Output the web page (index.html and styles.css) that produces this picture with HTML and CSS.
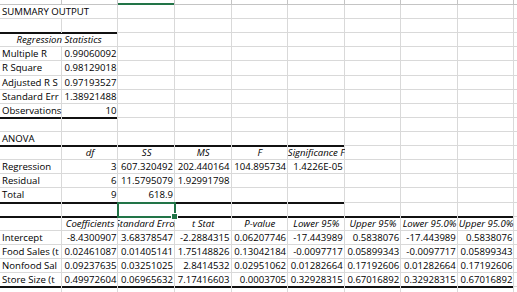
FILE: index.html
```html
<!DOCTYPE html>
<html>
<head>
<meta charset="utf-8">
<link rel="stylesheet" href="styles.css">
</head>
<body>
<div class="sheet">
  <div class="row head">
    <div class="c"></div><div class="c"></div><div class="c on"></div><div class="c"></div><div class="c"></div><div class="c"></div><div class="c"></div><div class="c"></div><div class="c"></div><div class="c"></div>
  </div>
  <div class="row">
    <div class="c span2">SUMMARY OUTPUT</div><div class="c"></div><div class="c"></div><div class="c"></div><div class="c"></div><div class="c"></div><div class="c"></div><div class="c"></div><div class="c"></div>
  </div>
  <div class="row">
    <div class="c bb"></div><div class="c bb"></div><div class="c"></div><div class="c"></div><div class="c"></div><div class="c"></div><div class="c"></div><div class="c"></div><div class="c"></div><div class="c"></div>
  </div>
  <div class="row">
    <div class="c span2 bt h"><span>Regression Statistics</span></div><div class="c"></div><div class="c"></div><div class="c"></div><div class="c"></div><div class="c"></div><div class="c"></div><div class="c"></div><div class="c"></div>
  </div>
  <div class="row">
    <div class="c">Multiple R</div><div class="c n">0.99060092</div><div class="c"></div><div class="c"></div><div class="c"></div><div class="c"></div><div class="c"></div><div class="c"></div><div class="c"></div><div class="c"></div>
  </div>
  <div class="row">
    <div class="c">R Square</div><div class="c n">0.98129018</div><div class="c"></div><div class="c"></div><div class="c"></div><div class="c"></div><div class="c"></div><div class="c"></div><div class="c"></div><div class="c"></div>
  </div>
  <div class="row">
    <div class="c">Adjusted R S</div><div class="c n">0.97193527</div><div class="c"></div><div class="c"></div><div class="c"></div><div class="c"></div><div class="c"></div><div class="c"></div><div class="c"></div><div class="c"></div>
  </div>
  <div class="row">
    <div class="c">Standard Err</div><div class="c n">1.38921488</div><div class="c"></div><div class="c"></div><div class="c"></div><div class="c"></div><div class="c"></div><div class="c"></div><div class="c"></div><div class="c"></div>
  </div>
  <div class="row">
    <div class="c bb">Observations</div><div class="c n bb">10</div><div class="c"></div><div class="c"></div><div class="c"></div><div class="c"></div><div class="c"></div><div class="c"></div><div class="c"></div><div class="c"></div>
  </div>
  <div class="row">
    <div class="c bt"></div><div class="c bt"></div><div class="c"></div><div class="c"></div><div class="c"></div><div class="c"></div><div class="c"></div><div class="c"></div><div class="c"></div><div class="c"></div>
  </div>
  <div class="row">
    <div class="c bb">ANOVA</div><div class="c bb"></div><div class="c bb"></div><div class="c bb"></div><div class="c bb"></div><div class="c bb"></div><div class="c"></div><div class="c"></div><div class="c"></div><div class="c"></div>
  </div>
  <div class="row">
    <div class="c bt"></div><div class="c bt h"><span>df</span></div><div class="c bt h"><span>SS</span></div><div class="c bt h"><span>MS</span></div><div class="c bt h"><span>F</span></div><div class="c bt h"><span>Significance F</span></div><div class="c"></div><div class="c"></div><div class="c"></div><div class="c"></div>
  </div>
  <div class="row">
    <div class="c">Regression</div><div class="c n">3</div><div class="c n">607.320492</div><div class="c n">202.440164</div><div class="c n">104.895734</div><div class="c n">1.4226E-05</div><div class="c"></div><div class="c"></div><div class="c"></div><div class="c"></div>
  </div>
  <div class="row">
    <div class="c">Residual</div><div class="c n">6</div><div class="c n">11.5795079</div><div class="c n">1.92991798</div><div class="c"></div><div class="c"></div><div class="c"></div><div class="c"></div><div class="c"></div><div class="c"></div>
  </div>
  <div class="row">
    <div class="c bb">Total</div><div class="c n bb">9</div><div class="c n bb">618.9</div><div class="c bb"></div><div class="c bb"></div><div class="c bb"></div><div class="c"></div><div class="c"></div><div class="c"></div><div class="c"></div>
  </div>
  <div class="row">
    <div class="c bt bb"></div><div class="c bt bb"></div><div class="c bt bb sel"></div><div class="c bt bb"></div><div class="c bt bb"></div><div class="c bt bb"></div><div class="c bb"></div><div class="c bb"></div><div class="c bb"></div><div class="c"></div>
  </div>
  <div class="row">
    <div class="c bt"></div><div class="c bt h"><span>Coefficients</span></div><div class="c bt h"><span>Standard Error</span></div><div class="c bt h"><span>t Stat</span></div><div class="c bt h"><span>P-value</span></div><div class="c bt h"><span>Lower 95%</span></div><div class="c bt h"><span>Upper 95%</span></div><div class="c bt h"><span>Lower 95.0%</span></div><div class="c bt h"><span>Upper 95.0%</span></div><div class="c"></div>
  </div>
  <div class="row">
    <div class="c">Intercept</div><div class="c n">-8.4300907</div><div class="c n">3.68378547</div><div class="c n">-2.2884315</div><div class="c n">0.06207746</div><div class="c n">-17.443989</div><div class="c n">0.5838076</div><div class="c n">-17.443989</div><div class="c n">0.5838076</div><div class="c"></div>
  </div>
  <div class="row">
    <div class="c">Food Sales (t</div><div class="c n">0.02461087</div><div class="c n">0.01405141</div><div class="c n">1.75148826</div><div class="c n">0.13042184</div><div class="c n">-0.0097717</div><div class="c n">0.05899343</div><div class="c n">-0.0097717</div><div class="c n">0.05899343</div><div class="c"></div>
  </div>
  <div class="row">
    <div class="c">Nonfood Sal</div><div class="c n">0.09237635</div><div class="c n">0.03251025</div><div class="c n">2.8414532</div><div class="c n">0.02951062</div><div class="c n">0.01282664</div><div class="c n">0.17192606</div><div class="c n">0.01282664</div><div class="c n">0.17192606</div><div class="c"></div>
  </div>
  <div class="row">
    <div class="c bb">Store Size (t</div><div class="c n bb">0.49972604</div><div class="c n bb">0.06965632</div><div class="c n bb">7.17416603</div><div class="c n bb">0.0003705</div><div class="c n bb">0.32928315</div><div class="c n bb">0.67016892</div><div class="c n bb">0.32928315</div><div class="c n bb">0.67016892</div><div class="c"></div>
  </div>
  <div class="row">
    <div class="c bt"></div><div class="c bt"></div><div class="c bt"></div><div class="c bt"></div><div class="c bt"></div><div class="c bt"></div><div class="c bt"></div><div class="c bt"></div><div class="c bt"></div><div class="c"></div>
  </div>
</div>
</body>
</html>
```
FILE: styles.css
```css
* { box-sizing: border-box; }
html, body { margin: 0; padding: 0; background: #fff; }
body {
  font-family: "Open Sans", Lato, sans-serif;
  font-size: 9.6px;
  color: #000;
}
.sheet { width: 517px; height: 292px; overflow: hidden; }
.row {
  display: grid;
  grid-template-columns: 61.8px repeat(8, 56.58px) 1fr;
  height: 14.115px;
}
.row.head { height: 5px; }
.c {
  overflow: clip;
  white-space: nowrap;
  padding: 0 2px;
  line-height: 14px;
  box-shadow: inset -1px -1px 0 #d9d9d9;
}
.head .c { box-shadow: inset -1px -1px 0 #c4c4c4; }
.head .on { box-shadow: inset -1px 0 0 #c4c4c4, inset 0 -2px 0 #227447; }
.span2 { grid-column: span 2; }
.n { text-align: right; }
.h { display: flex; justify-content: center; font-style: italic; }
.h span { flex: none; }
.bb { box-shadow: inset -1px 0 0 #d9d9d9, inset 0 -1px 0 #111; }
.bt { box-shadow: inset -1px -1px 0 #d9d9d9, inset 0 1px 0 #111; }
.bt.bb { box-shadow: inset -1px 0 0 #d9d9d9, inset 0 1px 0 #111, inset 0 -1px 0 #111; }
.sel { position: relative; overflow: visible; z-index: 1; }
.sel::after {
  content: "";
  position: absolute;
  left: -1px; top: -1px; right: -1px; bottom: -1px;
  border: 2px solid #227447;
}
.sel::before {
  content: "";
  position: absolute;
  right: -3px; bottom: -3px;
  width: 5px; height: 5px;
  background: #227447;
  border: 1px solid #fff;
  z-index: 2;
}
```
